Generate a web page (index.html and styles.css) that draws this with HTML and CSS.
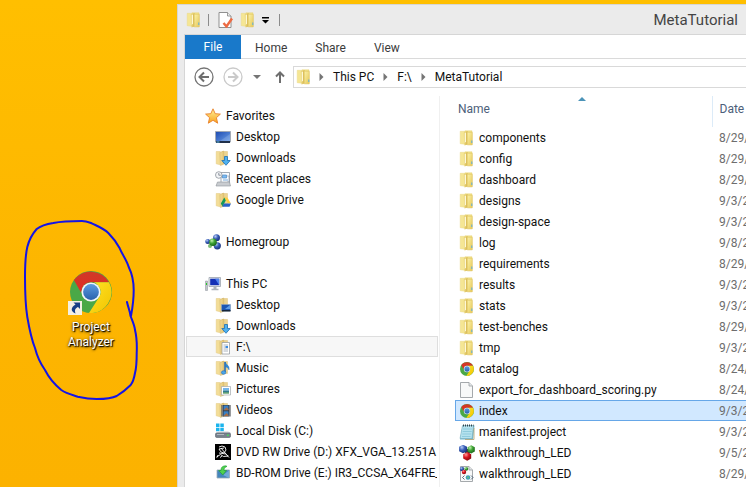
FILE: index.html
```html
<!DOCTYPE html>
<html lang="en">
<head>
<meta charset="utf-8">
<title>MetaTutorial</title>
<link rel="stylesheet" href="styles.css">
</head>
<body>
<svg class="defs" aria-hidden="true">
  <defs>
    <linearGradient id="gBack" x1="0" x2="1" y1="0" y2="0"><stop offset="0" stop-color="#eedd85"/><stop offset="1" stop-color="#d6b650"/></linearGradient>
    <linearGradient id="gFront" x1="0" x2="1" y1="0" y2="1"><stop offset="0" stop-color="#fbf2a8"/><stop offset="1" stop-color="#e6c858"/></linearGradient>
    <linearGradient id="gPale" x1="0" x2="1" y1="0" y2="0"><stop offset="0" stop-color="#f3dc96"/><stop offset="1" stop-color="#e3c675"/></linearGradient>
    <linearGradient id="gScreen" x1="0" x2="1" y1="0" y2="1"><stop offset="0" stop-color="#1c49b0"/><stop offset="1" stop-color="#6fa3ea"/></linearGradient>
    <linearGradient id="gStar" x1="0" x2="0" y1="0" y2="1"><stop offset="0" stop-color="#fff29a"/><stop offset="1" stop-color="#f9a21c"/></linearGradient>
    <linearGradient id="gBlue" x1="0" x2="0" y1="0" y2="1"><stop offset="0" stop-color="#5b9be0"/><stop offset="1" stop-color="#2a62ad"/></linearGradient>
    <linearGradient id="gRed" x1="0" x2="0" y1="0" y2="1"><stop offset="0" stop-color="#cf3a28"/><stop offset="1" stop-color="#e42a22"/></linearGradient>
    <linearGradient id="gYellow" x1="0" x2="1" y1="0" y2="1"><stop offset="0" stop-color="#ffe226"/><stop offset="1" stop-color="#f2c400"/></linearGradient>
    <radialGradient id="bBlue" cx=".35" cy=".3" r=".7"><stop offset="0" stop-color="#b9cdf5"/><stop offset=".5" stop-color="#3a5fb8"/><stop offset="1" stop-color="#1c3580"/></radialGradient>
    <radialGradient id="bGreen" cx=".35" cy=".3" r=".7"><stop offset="0" stop-color="#c4f0b0"/><stop offset=".5" stop-color="#3fa535"/><stop offset="1" stop-color="#1c6a1c"/></radialGradient>
    <radialGradient id="bRed" cx=".35" cy=".3" r=".7"><stop offset="0" stop-color="#ff9a9a"/><stop offset=".5" stop-color="#d8141e"/><stop offset="1" stop-color="#8e0a10"/></radialGradient>
  </defs>
  <symbol id="folder" viewBox="0 0 16 16">
    <path d="M1.200 1.300H6v13l-4.800-.6z" fill="#f5e694" stroke="#ead888" stroke-width=".5"/>
    <path d="M6 .8h7v13H6z" fill="#f3e288" stroke="#e6d074" stroke-width=".5"/>
    <path d="M4.500 2.500 8.500 1v13.500L5.500 15.500z" fill="url(#gBack)"/>
    <path d="M5.700 3 7 2.500v9l-1.300 1.500z" fill="#fdf8d6"/>
    <path d="M8.300 2.300h5v12.600h-5z" fill="url(#gFront)" stroke="#dcc05e" stroke-width=".5"/>
    <path d="M12.300 10.500h1v2.500h-1z" fill="#5aaede"/>
  </symbol>
  <symbol id="pale" viewBox="0 0 16 16">
    <path d="M1.200 1.500h4v13.300l-4-1z" fill="#f3dd97" stroke="#e2c981" stroke-width=".5"/>
    <path d="M7 1.500h5.500v12H7z" fill="#ecd390" stroke="#dcc07a" stroke-width=".5"/>
    <path d="M5 2.500 8.700 1v13.200L5.500 15.500z" fill="url(#gPale)" stroke="#d3b366" stroke-width=".5"/>
  </symbol>
  <symbol id="down" viewBox="0 0 16 16"><use href="#pale"/><path d="M9.500 6.500h3v4h2.700L11 15.300 6.800 10.500h2.700z" fill="#4fb1ef" stroke="#1b6fb5" stroke-width=".8"/></symbol>
  <symbol id="deskf" viewBox="0 0 16 16"><use href="#pale"/><path d="M6.500 7.500h9v6.500h-9z" fill="#1c57b4" stroke="#8da4bf" stroke-width=".6"/><path d="M7 13h8.500v1.500H7z" fill="#16263b"/><path d="m10 12 5-4v4z" fill="#5f9ee8"/></symbol>
  <symbol id="docf" viewBox="0 0 16 16"><use href="#pale"/><path d="M7 3.500h7.500v11.500H7z" fill="#fff" stroke="#8d9299" stroke-width=".7"/><path d="M8.500 6h4.500M8.500 8h2M8.500 10h4.500M8.500 12h4.500" stroke="#8b97a5" stroke-width=".7"/><path d="M10.500 7h2.500v2h-2.500z" fill="#3b8be0"/></symbol>
  <symbol id="musicf" viewBox="0 0 16 16"><use href="#pale"/><path d="M10 2v10" stroke="#1f69b8" stroke-width="1.500"/><path d="M10.500 2c0 3 4.500 3 3.500 8-.5-2-2-3-3.500-3z" fill="#2c8ad8" stroke="#1f69b8" stroke-width=".4"/><ellipse cx="8.600" cy="12.500" rx="2.200" ry="1.800" fill="#4aa6ea" stroke="#1f69b8" stroke-width=".6"/></symbol>
  <symbol id="picf" viewBox="0 0 16 16"><use href="#pale"/><path d="M6.500 5.500h9v8.500h-9z" fill="#fff" stroke="#a3a9ae" stroke-width=".7"/><path d="M8 7h6v2.500H8z" fill="#73b6ec"/><path d="M8 9.500h6v3H8z" fill="#2f7a8e"/><path d="M8 11.500h6v1H8z" fill="#86bb64"/></symbol>
  <symbol id="videof" viewBox="0 0 16 16"><use href="#pale"/><path d="M6.500 3h9v11.500h-9z" fill="#30343a"/><path d="M8.500 3.500h5v4.700h-5zM8.500 9.300h5v4.700h-5z" fill="#3981c8"/><path d="m8.500 8.200 3-3 2 2v1zM8.500 14l3-3 2 2v1z" fill="#a66d45"/><path d="M7.500 3.500v11M14.500 3.500v11" stroke="#e7eaee" stroke-width=".8" stroke-dasharray="1 1"/></symbol>
  <symbol id="gdrive" viewBox="0 0 16 16"><use href="#pale"/><path d="m9.300 5.500 3 0 3.700 6h-3z" fill="#ffcf3f"/><path d="m9.300 5.500 1.500 3-3.300 6-1.700-3z" fill="#169a57"/><path d="M8.700 11.500H16l-1.500 3.300H7.300z" fill="#2a62c8"/></symbol>
  <symbol id="star" viewBox="0 0 16 16"><path d="m8 .8 2.200 4.900 5.200.4-4 3.600 1.300 5.500L8 12.300l-4.700 2.900 1.300-5.500-4-3.600 5.200-.4z" fill="url(#gStar)" stroke="#e8802a" stroke-width=".9"/></symbol>
  <symbol id="desktop" viewBox="0 0 16 16"><path d="M.5 2.500h15v10.500H.5z" fill="url(#gScreen)" stroke="#a3aab5"/><path d="M1 12h14v2H1z" fill="#20304a"/><path d="M1.500 12.500h3v1h-3z" fill="#65c3ef"/><path d="m5 12 10-7v7z" fill="#fff" opacity=".15"/></symbol>
  <symbol id="recent" viewBox="0 0 16 16"><path d="M6 1.500h8.500v11H6z" fill="#fafcff" stroke="#7b8794" stroke-width=".7"/><path d="M7.500 4h4v3h-4zM8 9h5" fill="#7ebaf0" stroke="#468ac9" stroke-width=".7"/><path d="M12 5h2v6h-2" fill="none" stroke="#8996a5" stroke-width=".6"/><path d="m2.500 11-1.500 4h14.500l-1-4z" fill="#c9ccd0" stroke="#8e949b" stroke-width=".6"/><circle cx="3.800" cy="4" r="3.300" fill="#f4f5f7" stroke="#8d939b" stroke-width=".8"/><path d="M3.800 2v2.200h2" fill="none" stroke="#606b78" stroke-width=".7"/></symbol>
  <symbol id="home" viewBox="0 0 16 16"><circle cx="2.800" cy="7.500" r="2.500" fill="url(#bBlue)"/><circle cx="11.500" cy="3.800" r="3.500" fill="url(#bBlue)"/><circle cx="12.300" cy="11.800" r="3.600" fill="url(#bBlue)"/><circle cx="5" cy="12" r="2" fill="#7ebc75"/><circle cx="8" cy="8.200" r="3.800" fill="url(#bGreen)"/></symbol>
  <symbol id="pc" viewBox="0 0 16 16"><path d="M.5 5h2v9.500h-2z" fill="#bfc4ca" stroke="#8a9099" stroke-width=".5"/><path d="M1 7h1v2H1z" fill="#25cc27"/><path d="M4 1.500h11.500v9H4z" fill="#e8ebee" stroke="#9da5ae" stroke-width=".8"/><path d="M5.200 2.700h9v6.500h-9z" fill="#1531b6"/><path d="M10 2.700h4.200v6.500z" fill="#4e81ec"/><path d="M8.500 10.800h3v2h2v1.500h-7v-1.500h2z" fill="#aeb4bc"/></symbol>
  <symbol id="disk" viewBox="0 0 16 16"><path d="M1 .5h3.500v3.500H1zM5.300.5h3.500v3.500H5.300zM1 4.800h3.500v3.500H1zM5.300 4.800h3.500v3.500H5.300z" fill="#1bb4ed"/><path d="M1.500 9.500 4 8.500h9l2.500 1v1H.500z" fill="#cfd2d7"/><rect x=".5" y="10" width="15" height="4.500" rx="1.200" fill="#78828d" stroke="#59626c" stroke-width=".6"/><path d="M2 11.500h7" stroke="#b0b7bf"/><path d="M12 11.500h1.800v1.500H12z" fill="#45df57"/></symbol>
  <symbol id="dvd" viewBox="0 0 16 16"><path d="M0 0h16v16H0z" fill="#000"/><path d="m4 3 3-1 3 1 1 3-2 3-3-1-2-3 5-1M6 4l5 6M4 9l7 1 2 2M1.500 13l4-2.500 3 2 5-.5M3 11l-1 2.500M12 11.500l2 2M7 12l-2 1.500" fill="none" stroke="#fff" stroke-width=".9"/></symbol>
  <symbol id="bd" viewBox="0 0 16 16"><path d="M2 5h12.500v8H2z" fill="#4486bc" stroke="#9ba9b7" stroke-width=".8"/><path d="m8 10 6-4.500V13z" fill="#71a9d8"/><path d="M10.500.8C6.800 1 6 3 6 5.500H3.700L7.800 10 11.500 5.500H9C9 3.500 9.500 2.500 12 1.300z" fill="#4fd04f" stroke="#1f9a33" stroke-width=".6"/></symbol>
  <symbol id="chrome" viewBox="0 0 42 42">
    <circle cx="21" cy="21" r="21" fill="#4aa847"/>
    <path d="M3.900 9A21 21 0 0 1 39 11.300H21a9.700 9.700 0 0 0-9.600 11z" fill="url(#gRed)"/>
    <path d="M39 11.300A21 21 0 0 1 19 42L29.400 25.800c3-5.500.5-11.500-5.500-14.500z" fill="url(#gYellow)"/>
    <circle cx="21" cy="21" r="9.600" fill="#f4f6f8"/>
    <circle cx="21" cy="21" r="7.900" fill="url(#gBlue)"/>
  </symbol>
  <symbol id="html" viewBox="0 0 16 16"><use href="#chrome" x="1" y="1" width="14" height="14"/></symbol>
  <symbol id="file" viewBox="0 0 16 16"><path d="M1.500.5h8.500L13.500 4v11.500h-12z" fill="#f8f9f9" stroke="#9b9fa3" stroke-width=".9"/><path d="M10 .5V4h3.500" fill="#e3e6e8" stroke="#9b9fa3" stroke-width=".8"/></symbol>
  <symbol id="note" viewBox="0 0 16 16"><path d="m3.500 2 12-.5-1.500 14H1z" fill="#70b7ce"/><path d="M3.500 1.500h11l-1.500 13H1z" fill="#b5e2ee" stroke="#79aebd" stroke-width=".6"/><path d="M4 5h9M3.700 7.500h9M3.300 10h9M3 12.500h8.500" stroke="#75bcd0" stroke-width=".6"/><path d="M4 1.500h10.500" stroke="#34434a" stroke-width="2" stroke-dasharray="1 1"/><path d="M15 4v11.500H6" fill="none" stroke="#b5a16d" stroke-width=".8"/></symbol>
  <symbol id="balls" viewBox="0 0 16 16"><path d="M4 4h9l-4.500 8z" fill="#36383c"/><path d="m4-.3 4 2.100v4.400L4 8.300.1 6.200V1.800z" fill="url(#bBlue)"/><path d="m12.200.2 3.600 2v4.200l-3.600 2-3.600-2V2.200z" fill="url(#bGreen)"/><path d="m8.200 7 4 2.200v4.200l-4 2.300-4-2.300V9.200z" fill="url(#bRed)"/></symbol>
  <symbol id="xme" viewBox="0 0 16 16"><use href="#file"/><circle cx="3" cy="3" r="2.200" fill="url(#bBlue)"/><circle cx="7.300" cy="2.800" r="1.900" fill="url(#bGreen)"/><circle cx="5" cy="6" r="2.200" fill="url(#bRed)"/><circle cx="9" cy="11.500" r="2.300" fill="#3d9dbc"/><path d="m5.500 9.500-2 2 2 2M12 9.500l2 2-2 2" fill="none" stroke="#344a62" stroke-width=".8"/><circle cx="9" cy="11.500" r=".9" fill="#68c466"/></symbol>
  <symbol id="props" viewBox="0 0 16 16"><path d="M1 .5h8.500L13 4v11.500H1z" fill="#fff" stroke="#858585" stroke-width=".9"/><path d="M9.500.5V4H13" fill="#eee" stroke="#858585" stroke-width=".8"/><path d="m5.500 11 3 3.500L14 6.500" fill="none" stroke="#ed6b43" stroke-width="2.400"/></symbol>
  <symbol id="tri" viewBox="0 0 5 8"><path d="M.5 0 4.500 4 .5 8z" fill="#757575"/></symbol>
</svg>

<div class="shortcut">
  <div class="shortcut-pic">
    <svg class="shortcut-logo"><use href="#chrome"/></svg>
    <svg class="shortcut-arrow" viewBox="0 0 14 14"><path d="M0 0h14v14H0z" fill="#f4f0e4"/><path d="M5.500 1.500H12V8L10 6c-3 1.500-3.500 3-2.500 6.500C3 11 2 7 7.500 3.600z" fill="#173f86"/></svg>
  </div>
  <span>Project<br>Analyzer</span>
</div>
<svg class="ink" viewBox="0 0 176 487" aria-hidden="true"><path d="M127 302c1 5 3 9 3.500 14 2 5 4 9 4.500 14 2 8 2 16 1.700 23 0 8 0 14-1.700 20-1 6-2 9-4.300 12-4 4-9 8-14 11-6 3-13 3-20 3-7 0-13-1-19-2.300-6-2-11-3-16.400-6.700C54 384 49 378 45 370c-5-7-8-14-10-22-4-10-6-21-7.700-31C25 303 25 290 25 277c0-10 0-20 2.300-30 2-8 5-13 9.400-18 5-4 10-5 16.600-6 10-2 19-2 28.700-2 3 0 6 1 9.700 2.300 6 3 12 5 16.600 9.700 5 5 8 9 11.400 15.300 3 7 7 12 9 18.700 4 8 5 15 5 23 0 9-1 17-2.700 26" fill="none" stroke="#1414e6" stroke-width="2" stroke-linecap="round" stroke-linejoin="round"/></svg>

<main class="window">
  <header class="titlebar">
    <svg class="icon"><use href="#folder"/></svg>
    <i class="bar"></i>
    <button class="tool" aria-label="Properties"><svg class="icon"><use href="#props"/></svg></button>
    <button class="tool" aria-label="New folder"><svg class="icon"><use href="#folder"/></svg></button>
    <button class="tool" aria-label="Customize toolbar"><svg class="more" viewBox="0 0 7 7"><path d="M0 0h7v1.500H0zM0 3h7L3.500 6.500z"/></svg></button>
    <i class="bar"></i>
    <h1>MetaTutorial</h1>
  </header>
  <div class="frame">
    <nav class="tabs"><button class="tab file">File</button><button class="tab">Home</button><button class="tab">Share</button><button class="tab">View</button></nav>
    <div class="navbar">
      <button class="tool" aria-label="Back"><svg class="round" viewBox="0 0 20 20"><circle cx="10" cy="10" r="9" fill="none" stroke="#757575" stroke-width="1.300"/><path d="M15 10H6M10 5.500 5.500 10l4.500 4.500" fill="none" stroke="#6e6e6e" stroke-width="2"/></svg></button>
      <button class="tool" aria-label="Forward"><svg class="round" viewBox="0 0 20 20"><circle cx="10" cy="10" r="9" fill="none" stroke="#cacaca" stroke-width="1.300"/><path d="M5 10h9M10 5.500l4.500 4.500-4.500 4.500" fill="none" stroke="#cacaca" stroke-width="2"/></svg></button>
      <button class="tool" aria-label="Recent locations"><svg class="drop" viewBox="0 0 8 4"><path d="M0 0h8L4 4z" fill="#757575"/></svg></button>
      <button class="tool" aria-label="Up"><svg class="up" viewBox="0 0 10 12"><path d="M5 12V2M1 5.500 5 1.500l4 4" fill="none" stroke="#6e6e6e" stroke-width="2"/></svg></button>
      <div class="address">
        <svg class="icon"><use href="#folder"/></svg>
        <svg class="tri"><use href="#tri"/></svg><a href="#">This PC</a>
        <svg class="tri"><use href="#tri"/></svg><a href="#">F:\</a>
        <svg class="tri"><use href="#tri"/></svg><a href="#">MetaTutorial</a>
      </div>
    </div>
    <div class="content">
      <aside class="tree">
        <ul>
          <li><a href="#"><svg class="icon"><use href="#star"/></svg>Favorites</a>
            <ul>
              <li><a href="#"><svg class="icon"><use href="#desktop"/></svg>Desktop</a></li>
              <li><a href="#"><svg class="icon"><use href="#down"/></svg>Downloads</a></li>
              <li><a href="#"><svg class="icon"><use href="#recent"/></svg>Recent places</a></li>
              <li><a href="#"><svg class="icon"><use href="#gdrive"/></svg>Google Drive</a></li>
            </ul></li>
          <li><a href="#"><svg class="icon"><use href="#home"/></svg>Homegroup</a></li>
          <li><a href="#"><svg class="icon"><use href="#pc"/></svg>This PC</a>
            <ul>
              <li><a href="#"><svg class="icon"><use href="#deskf"/></svg>Desktop</a></li>
              <li><a href="#"><svg class="icon"><use href="#down"/></svg>Downloads</a></li>
              <li><a href="#" class="current"><svg class="icon"><use href="#docf"/></svg>F:\</a></li>
              <li><a href="#"><svg class="icon"><use href="#musicf"/></svg>Music</a></li>
              <li><a href="#"><svg class="icon"><use href="#picf"/></svg>Pictures</a></li>
              <li><a href="#"><svg class="icon"><use href="#videof"/></svg>Videos</a></li>
              <li><a href="#"><svg class="icon"><use href="#disk"/></svg>Local Disk (C:)</a></li>
              <li><a href="#"><svg class="icon"><use href="#dvd"/></svg>DVD RW Drive (D:) XFX_VGA_13.251A</a></li>
              <li><a href="#"><svg class="icon"><use href="#bd"/></svg>BD-ROM Drive (E:) IR3_CCSA_X64FRE_E</a></li>
            </ul></li>
        </ul>
      </aside>
      <section class="files">
        <table>
          <thead><tr><th>Name<svg class="sort" viewBox="0 0 8 4"><path d="M0 4 4 0l4 4z" fill="#4b93b8"/></svg></th><th>Date</th></tr></thead>
          <tbody>
            <tr><td><svg class="icon"><use href="#folder"/></svg>components</td><td>8/29/2014</td></tr>
            <tr><td><svg class="icon"><use href="#folder"/></svg>config</td><td>8/29/2014</td></tr>
            <tr><td><svg class="icon"><use href="#folder"/></svg>dashboard</td><td>8/29/2014</td></tr>
            <tr><td><svg class="icon"><use href="#folder"/></svg>designs</td><td>9/3/2014</td></tr>
            <tr><td><svg class="icon"><use href="#folder"/></svg>design-space</td><td>9/3/2014</td></tr>
            <tr><td><svg class="icon"><use href="#folder"/></svg>log</td><td>9/8/2014</td></tr>
            <tr><td><svg class="icon"><use href="#folder"/></svg>requirements</td><td>8/29/2014</td></tr>
            <tr><td><svg class="icon"><use href="#folder"/></svg>results</td><td>9/3/2014</td></tr>
            <tr><td><svg class="icon"><use href="#folder"/></svg>stats</td><td>9/3/2014</td></tr>
            <tr><td><svg class="icon"><use href="#folder"/></svg>test-benches</td><td>8/29/2014</td></tr>
            <tr><td><svg class="icon"><use href="#folder"/></svg>tmp</td><td>9/3/2014</td></tr>
            <tr><td><svg class="icon"><use href="#html"/></svg>catalog</td><td>8/24/2014</td></tr>
            <tr><td><svg class="icon"><use href="#file"/></svg>export_for_dashboard_scoring.py</td><td>8/24/2014</td></tr>
            <tr class="selected"><td><svg class="icon"><use href="#html"/></svg>index</td><td>9/3/2014</td></tr>
            <tr><td><svg class="icon"><use href="#note"/></svg>manifest.project</td><td>9/3/2014</td></tr>
            <tr><td><svg class="icon"><use href="#balls"/></svg>walkthrough_LED</td><td>9/5/2014</td></tr>
            <tr><td><svg class="icon"><use href="#xme"/></svg>walkthrough_LED</td><td>8/29/2014</td></tr>
          </tbody>
        </table>
      </section>
    </div>
  </div>
</main>
</body>
</html>
```
FILE: styles.css
```css
* { box-sizing: border-box; }
html, body { height: 100%; }
body {
  margin: 0;
  padding: 4px 0 0 177px;
  overflow: hidden;
  position: relative;
  background: linear-gradient(#ffbf00, #fdb500 60%, #fcb200);
  font: 12px/20px Roboto, "Liberation Sans", sans-serif;
  color: #111;
}
ul { list-style: none; margin: 0; padding: 0; }
a { color: inherit; text-decoration: none; }
button { font: inherit; color: inherit; background: none; border: 0; padding: 0; }
svg { display: block; flex: none; }
.defs { position: absolute; width: 0; height: 0; }
.icon { width: 16px; height: 16px; }

.shortcut {
  position: absolute;
  left: 52px;
  top: 271px;
  width: 78px;
  text-align: center;
  line-height: 15px;
  color: #fff;
  text-shadow: 1px 1px 1px #000, 0 1px 3px #000;
}
.shortcut-pic { position: relative; width: 42px; margin: 0 auto 7px; }
.shortcut-logo { width: 42px; height: 42px; }
.shortcut-arrow { position: absolute; left: -2px; bottom: -2px; width: 14px; height: 14px; }
.ink { position: absolute; left: 0; top: 0; width: 176px; height: 487px; }

.window {
  display: flex;
  flex-direction: column;
  height: 100%;
  background: #ebebeb;
  border: 1px solid #d6d6d6;
  border-width: 1px 0 0 1px;
}
.titlebar { display: flex; align-items: center; height: 29px; flex: none; padding: 0 8px; }
.titlebar h1 { margin: 0 0 0 auto; font-size: 15px; font-weight: 400; color: #444; }
.bar { width: 1px; height: 12px; background: #8c8c8c; margin: 0 9px 0 6px; }
.titlebar .tool { margin-right: 6px; }
.titlebar .tool + .bar { margin-left: 4px; }
.more { width: 7px; height: 7px; margin-top: 2px; }

.frame {
  flex: 1;
  display: flex;
  flex-direction: column;
  min-height: 0;
  margin-left: 6px;
  background: #fff;
  border: 1px solid #d6d6d6;
  border-width: 1px 0 0 1px;
}
.tabs { display: flex; height: 24px; flex: none; border-bottom: 1px solid #dadada; color: #3c3c3c; }
.tab { padding: 2px 14px 0; }
.tab.file { width: 56px; padding: 0; margin-bottom: -1px; background: #1979ca; color: #fff; }

.navbar { display: flex; align-items: center; height: 35px; margin-bottom: 2px; flex: none; padding-left: 9px; }
.round { width: 20px; height: 20px; margin-right: 9px; }
.drop { width: 8px; height: 4px; margin-right: 14px; margin-left: 1px; }
.up { width: 10px; height: 12px; margin-right: 8px; }
.address {
  flex: 1;
  display: flex;
  align-items: center;
  height: 22px;
  padding-left: 2px;
  border: 1px solid #d9d9d9;
  border-right: 0;
}
.address .tri { width: 5px; height: 8px; margin: 0 9px 0 7px; }
.address a + .tri { margin-left: 9px; }

.content { flex: 1; display: flex; min-height: 0; }
.tree { width: 255px; flex: none; padding: 9px 1px 0; border-right: 1px solid #f0f0f0; overflow: hidden; }
.tree > ul > li { margin-bottom: 21px; }
.tree a {
  display: flex;
  align-items: center;
  gap: 5px;
  height: 21px;
  padding-left: 18px;
  border: 1px solid transparent;
  white-space: nowrap;
  overflow: hidden;
}
.tree ul ul a { padding-left: 28px; }
.tree a.current { background: #f7f7f7; border-color: #dedede; }

.files { flex: 1; min-width: 0; overflow: hidden; padding-left: 15px; }
table { width: 360px; table-layout: fixed; border-collapse: collapse; text-align: left; }
th { position: relative; height: 31px; padding: 0 0 5px 3px; font-weight: 400; color: #4c607a; }
th:first-child { width: 257px; }
th + th { border-left: 1px solid #dcebf8; }
th + th, td + td { padding-left: 7px; }
.sort { position: absolute; left: 123px; top: 1px; width: 8px; height: 4px; }
td { height: 21px; padding: 2px 0 0 4px; line-height: 19px; white-space: nowrap; }
td .icon { display: inline-block; vertical-align: -4px; margin-right: 4px; }
td + td { color: #6d6d6d; }
.selected td { background: #d1e8ff; box-shadow: inset 0 1px #66a7e8, inset 0 -1px #66a7e8; }
.selected td:first-child { box-shadow: inset 0 1px #66a7e8, inset 0 -1px #66a7e8, inset 1px 0 #66a7e8; }
```
